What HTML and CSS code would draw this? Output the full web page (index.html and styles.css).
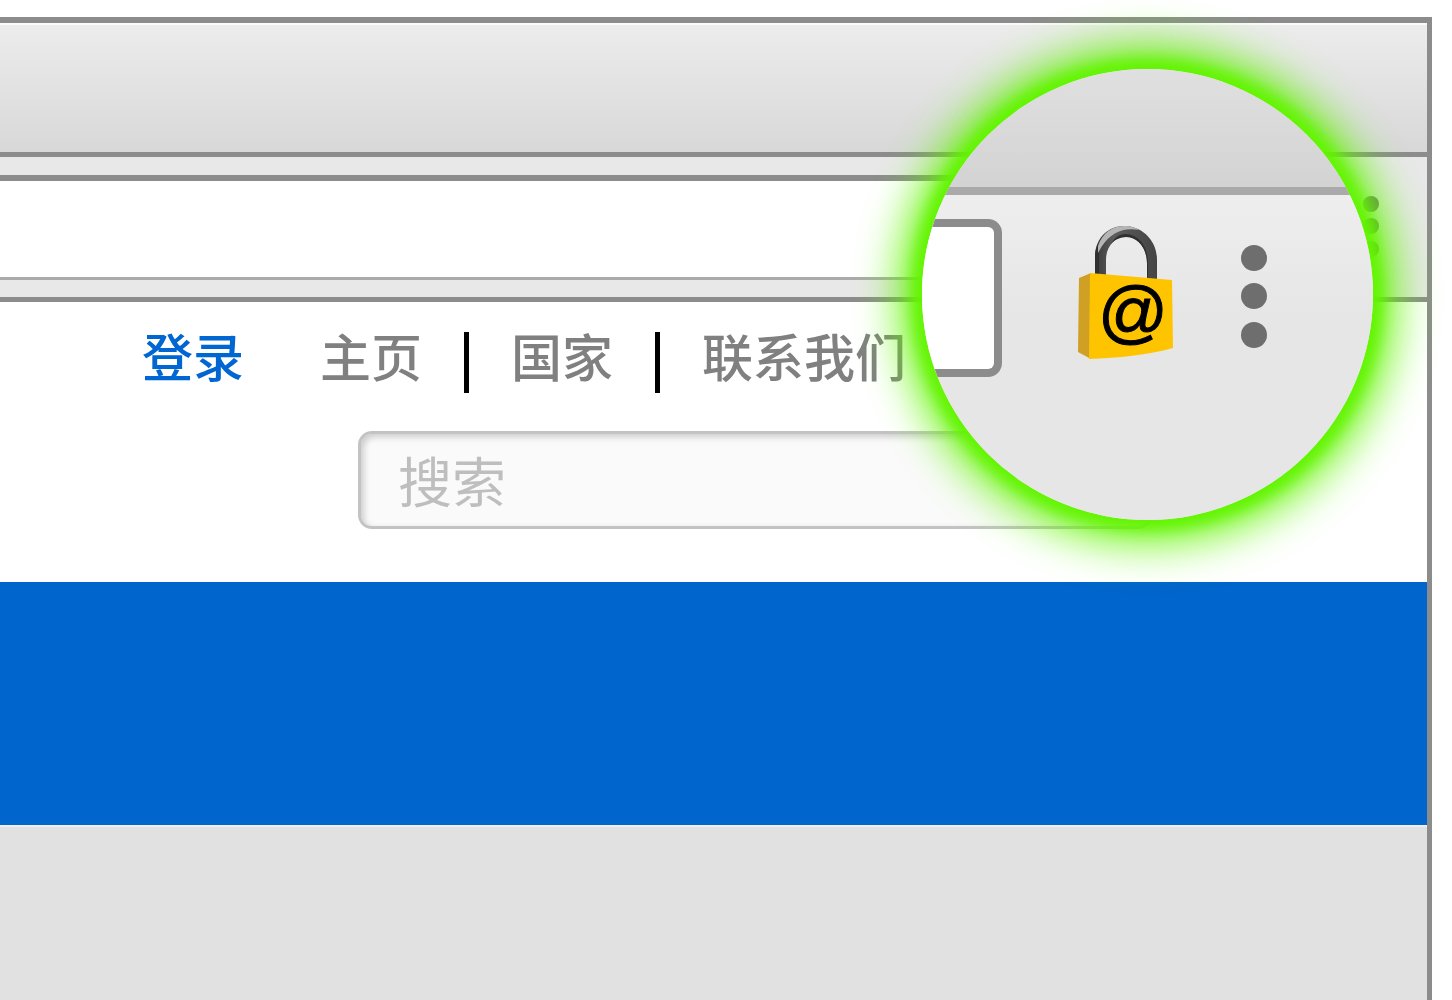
FILE: index.html
```html
<!DOCTYPE html>
<html lang="zh-CN">
<head>
  <meta charset="utf-8">
  <title>主页</title>
  <link rel="stylesheet" href="styles.css">
</head>
<body>
  <div class="browser">
    <div class="titlebar"></div>

    <div class="toolbar">
      <input class="address" type="text" aria-label="地址">
      <button class="menu-btn" aria-label="菜单">
        <svg width="16" height="64" viewBox="0 0 16 64" fill="#6e6e6e">
          <circle cx="8" cy="9" r="8"/>
          <circle cx="8" cy="31" r="8"/>
          <circle cx="8" cy="54" r="8"/>
        </svg>
      </button>
    </div>

    <header class="site-header">
      <nav class="site-nav">
        <a class="login" href="#">登录</a>
        <a href="#">主页</a>
        <span class="divider"></span>
        <a href="#">国家</a>
        <span class="divider"></span>
        <a href="#">联系我们</a>
      </nav>
      <input class="search" type="search" placeholder="搜索" aria-label="搜索">
    </header>

    <div class="banner"></div>
    <main class="content"></main>

    <!-- magnified corner of the toolbar -->
    <div class="lens">
      <div class="lens-title"></div>
      <div class="lens-toolbar">
        <div class="lens-address"></div>
        <button class="lens-lock" aria-label="Keeper">
          <svg width="96" height="158" viewBox="0 0 96 158">
            <defs>
              <linearGradient id="shackle" x1="0" x2="1" y1="0" y2="0">
                <stop offset="0" stop-color="#3a3a3a"/>
                <stop offset="0.3" stop-color="#5c5c5c"/>
                <stop offset="1" stop-color="#444"/>
              </linearGradient>
            </defs>
            <path fill="url(#shackle)" d="M17 60V38C17 18 31 7 46 7C64 7 79 21 79 41V64H69V44C69 29 60 18 48 18C36 18 28 28 28 41V60Z"/>
            <path fill="#303030" d="M17 60V38C17 33 18 29 20 25L22 28C21 32 21 36 21 40V60Z"/>
            <path fill="#303030" d="M48 15C61 15 70 28 70 44V64H69V45C69 29 60 18 48 18C42 18 36 21 33 25C36 19 41 15 48 15Z"/>
            <path fill="#b5b5b5" d="M20 27C25 13 35 7 46 7C53 7 58 9 61 11C45 8 33 14 24 27L20 34Z"/>
            <path fill="#d0a024" d="M1 59L13 54V140L0 133Z"/>
            <path fill="#ffc400" d="M12 54L94 61L95 129C70 136 40 139 11 140Z"/>
            <text class="lock-at" x="20" y="116">@</text>
          </svg>
        </button>
        <button class="lens-menu" aria-label="菜单">
          <svg width="26" height="158" viewBox="0 0 26 158" fill="#6e6e6e">
            <circle cx="13" cy="39" r="13"/>
            <circle cx="13" cy="77" r="13"/>
            <circle cx="13" cy="116" r="13"/>
          </svg>
        </button>
      </div>
    </div>
  </div>
</body>
</html>
```
FILE: styles.css
```css
* {
  box-sizing: border-box;
}
html, body {
  height: 100%;
}
body {
  margin: 0;
  padding: 17px 20px 0 0;
  background: #fff;
  overflow: hidden;
  font-family: "Liberation Sans", "Noto Sans CJK SC", sans-serif;
}
button {
  padding: 0;
  border: none;
  background: none;
  cursor: pointer;
}
svg {
  display: block;
}
.browser {
  position: relative;
  display: flex;
  flex-direction: column;
  height: 100%;
  border-top: 6px solid #8c8c8c;
  border-right: 5px solid #8c8c8c;
}
.titlebar {
  height: 134px;
  background: linear-gradient(#ececec, #d8d8d8);
  border-top: 2px solid #fafafa;
  border-bottom: 5px solid #8c8c8c;
}

/* toolbar */
.toolbar {
  display: flex;
  align-items: center;
  height: 145px;
  background: #e8e8e8;
  border-bottom: 5px solid #8c8c8c;
}
.address {
  flex: 1;
  height: 105px;
  padding: 0 20px;
  border: none;
  border-top: 6px solid #8c8c8c;
  border-bottom: 3px solid #aaa;
  border-radius: 0;
  background: #fff;
  font-size: 51px;
}
.menu-btn {
  margin: 0 48px 0 120px;
}

/* site */
.site-header {
  height: 280px;
  padding-top: 30px;
  background: #fff;
}
.site-nav {
  display: flex;
  align-items: flex-start;
  gap: 42px;
  height: 61px;
  padding-left: 142px;
  font-size: 51px;
  font-weight: 500;
  line-height: 56px;
  white-space: nowrap;
}
.site-nav a {
  color: #808080;
  text-decoration: none;
}
.site-nav .login {
  margin-right: 34px;
  color: #0066d2;
}
.divider {
  width: 5px;
  height: 61px;
  background: #000;
}
.search {
  display: block;
  width: calc(100% - 633px);
  height: 98px;
  margin: 38px 0 0 358px;
  padding: 8px 37px 0;
  border: 3px solid #c3c3c3;
  border-radius: 14px;
  background: #fafafa;
  box-shadow: inset 3px 3px 6px #ccc;
  font-family: inherit;
  font-size: 54px;
}
.search::placeholder {
  color: #bebebe;
}
.banner {
  height: 243px;
  background: #0065cc;
}
.content {
  flex: 1;
  background: #e1e1e1;
  border-top: 2px solid #eee;
}

/* lens */
.lens {
  position: absolute;
  top: 46px;
  right: 54px;
  width: 451px;
  height: 451px;
  border-radius: 50%;
  overflow: hidden;
  background: #e6e6e6;
  box-shadow: 0 0 14px 9px #62f500, 0 0 46px 21px #62f500;
}
.lens-title {
  height: 126px;
  background: linear-gradient(#e0e0e0, #d3d3d3);
  border-bottom: 8px solid #aaa;
}
.lens-toolbar {
  display: flex;
  height: 325px;
  padding-top: 24px;
  align-items: flex-start;
  background: linear-gradient(#eee, #e6e6e6 120px);
}
.lens-address {
  width: 80px;
  height: 158px;
  border: 8px solid #8c8c8c;
  border-left: none;
  border-radius: 0 14px 14px 0;
  background: #fff;
}
.lens-lock {
  margin: 0 67px 0 76px;
}
.lock-at {
  font-family: "Liberation Sans", sans-serif;
  font-size: 69px;
  stroke: #000;
  stroke-width: 1px;
}
```
